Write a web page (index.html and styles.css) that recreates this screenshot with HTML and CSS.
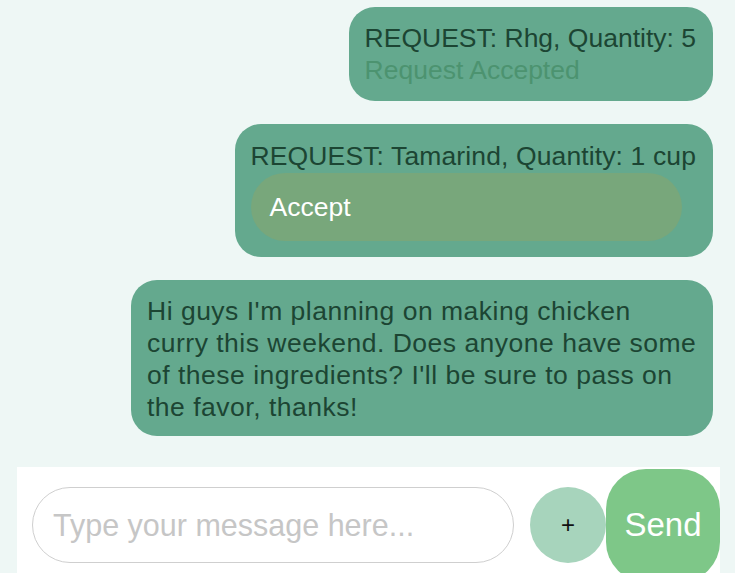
FILE: index.html
```html
<!DOCTYPE html>
<html>
<head>
<meta charset="utf-8">
<link rel="stylesheet" href="styles.css">
</head>
<body>
<div class="screen">
  <div class="messages">
    <div class="bubble">
      <div class="line">REQUEST: Rhg, Quantity: 5</div>
      <div class="line status">Request Accepted</div>
    </div>
    <div class="bubble bubble-req">
      <div class="line">REQUEST: Tamarind, Quantity: 1 cup</div>
      <div class="accept">Accept</div>
    </div>
    <div class="bubble bubble-text">
      <div class="line">Hi guys I'm planning on making chicken<br>curry this weekend. Does anyone have some<br>of these ingredients? I'll be sure to pass on<br>the favor, thanks!</div>
    </div>
  </div>
  <div class="composer">
    <div class="input">Type your message here...</div>
    <div class="plus">+</div>
    <div class="send">Send</div>
  </div>
</div>
</body>
</html>
```
FILE: styles.css
```css
html, body {
  margin: 0;
  padding: 0;
}
body {
  background: #eef7f5;
  font-family: "Liberation Sans", Arial, sans-serif;
  width: 735px;
  height: 573px;
  overflow: hidden;
}
.screen {
  display: flex;
  flex-direction: column;
}
.messages {
  display: flex;
  flex-direction: column;
  align-items: flex-end;
  gap: 23px;
  padding: 7px 22px 0 0;
}
.bubble {
  background: #64a98e;
  border-radius: 26px;
  padding: 15px 17px 15px 16px;
  color: #1c4533;
  font-size: 26.5px;
  line-height: 32px;
  max-width: 549px;
}
.status {
  color: #4c9370;
}
.bubble-req {
  padding: 16px 17px 16px 16px;
  letter-spacing: 0.12px;
}
.accept {
  margin-top: 1px;
  margin-right: 14px;
  background: #78a77b;
  border-radius: 34px;
  height: 68px;
  line-height: 68px;
  color: #ffffff;
  padding-left: 19px;
  letter-spacing: 0;
}
.bubble-text {
  padding: 15px 17px 13px 16px;
  letter-spacing: 0.5px;
  width: 549px;
  white-space: nowrap;
}
.composer {
  margin: 31px 15px 0 17px;
  background: #ffffff;
  height: 116px;
  display: flex;
  align-items: center;
  padding-left: 15px;
}
.input {
  width: 460px;
  height: 74px;
  border: 1.5px solid #cfcfcf;
  border-radius: 38px;
  color: #c6c6c6;
  font-size: 30.5px;
  line-height: 74px;
  padding-left: 20px;
}
.plus {
  margin-left: 16px;
  width: 76px;
  height: 76px;
  border-radius: 50%;
  background: #a7d4bc;
  color: #111;
  font-size: 24px;
  display: flex;
  align-items: center;
  justify-content: center;
}
.send {
  width: 114px;
  height: 113px;
  border-radius: 40px;
  background: #7ec788;
  color: #ffffff;
  font-size: 33px;
  display: flex;
  align-items: center;
  justify-content: center;
}
```
